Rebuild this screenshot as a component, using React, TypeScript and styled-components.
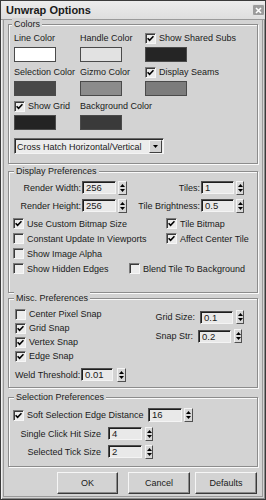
import React from "react";
import styled, { createGlobalStyle } from "styled-components";

const BG = "#d3d3d3";

const Global = createGlobalStyle`
  html, body { margin: 0; padding: 0; background: #ffffff; }
  body { font-family: "Liberation Sans", Arial, sans-serif; }
  * { box-sizing: border-box; }
`;

const Window = styled.div`
  width: 266px;
  height: 500px;
  background: ${BG};
  border: 1px solid #3a3a3a;
  box-shadow: inset 1px 1px 0 #f2f2f2, inset -1px -1px 0 #8a8a8a, inset 0 0 0 2px ${BG},
    inset 0 0 0 3px #9a9a9a;
  display: flex;
  flex-direction: column;
  font-family: "Liberation Sans", Arial, sans-serif;
  font-size: 9px;
  color: #1a1a1a;
  overflow: hidden;
`;

const TitleBar = styled.div`
  height: 19px;
  flex: none;
  display: flex;
  align-items: center;
  justify-content: space-between;
  padding: 0 0 0 5px;
  background: linear-gradient(#ececec, #dedede);
  border-bottom: 1px solid #9a9a9a;
  font-size: 11px;
  font-weight: bold;
  color: #1a1a1a;
`;

const CloseBtn = styled.div`
  width: 13px;
  height: 12px;
  border: 1px solid #e4e4e4;
  border-radius: 2px;
  background: #9c9c9c;
  display: flex;
  align-items: center;
  justify-content: center;
`;

const Content = styled.div`
  flex: 1;
  display: flex;
  flex-direction: column;
  padding: 0 7px 0 7px;
`;

const Group = styled.div<{ $h: number; $mt: number; $pt: number; $pl: number }>`
  position: relative;
  flex: none;
  height: ${(p) => p.$h}px;
  margin-top: ${(p) => p.$mt}px;
  padding: ${(p) => p.$pt}px 13px 0 ${(p) => p.$pl}px;
  border: 1px solid #8c8c8c;
  box-shadow: inset 1px 1px 0 #fafafa, 1px 1px 0 #fafafa;
`;

const Legend = styled.span<{ $x: number }>`
  position: absolute;
  top: -7px;
  left: ${(p) => p.$x}px;
  padding: 0 2px;
  line-height: 12px;
  background: ${BG};
  white-space: nowrap;
`;

const ColorGrid = styled.div`
  display: grid;
  grid-template-columns: 66px 65px 1fr;
  row-gap: 3px;
`;

const Cell = styled.div`
  display: flex;
  flex-direction: column;
  gap: 2px;
`;

const CellLabel = styled.div`
  height: 14px;
  line-height: 14px;
  white-space: nowrap;
  display: flex;
  align-items: center;
`;

const Swatch = styled.div<{ $c: string }>`
  width: 42px;
  height: 15px;
  border: 1px solid #4a4a4a;
  background: ${(p) => p.$c};
`;

const Dropdown = styled.div`
  margin-top: 8px;
  width: 150px;
  height: 16px;
  display: flex;
  align-items: center;
  border: 1px solid;
  border-color: #6a6a6a #f4f4f4 #f4f4f4 #6a6a6a;
  box-shadow: inset 1px 1px 0 #2a2a2a;
  background: #ececec;
  padding: 0 1px 0 2px;
`;

const DropText = styled.span`
  flex: 1;
  white-space: nowrap;
  overflow: hidden;
  padding-top: 1px;
`;

const DropArrow = styled.div`
  width: 13px;
  height: 13px;
  margin-top: 1px;
  border: 1px solid;
  border-color: #f4f4f4 #404040 #404040 #f4f4f4;
  background: ${BG};
  display: flex;
  align-items: center;
  justify-content: center;
`;

const Row = styled.div<{ $mt?: number; $h?: number }>`
  display: flex;
  align-items: center;
  height: ${(p) => p.$h ?? 13}px;
  margin-top: ${(p) => p.$mt ?? 0}px;
`;

const CheckRow = styled.div<{ $mt?: number }>`
  display: flex;
  align-items: center;
  height: 15px;
  margin-top: ${(p) => p.$mt ?? 0}px;
  padding-left: 4px;
`;

const FieldRow = styled.div`
  display: flex;
  align-items: center;
  flex: none;
`;

const FieldLabel = styled.span<{ $w?: number; $gap: number }>`
  width: ${(p) => (p.$w ? `${p.$w}px` : "auto")};
  text-align: right;
  padding-right: ${(p) => p.$gap}px;
  white-space: nowrap;
  flex: none;
`;

const Input = styled.div<{ $w: number; $h: number }>`
  width: ${(p) => p.$w}px;
  height: ${(p) => p.$h}px;
  border: 1px solid;
  border-color: #505050 #f4f4f4 #f4f4f4 #505050;
  box-shadow: inset 1px 1px 0 #1e1e1e;
  background: #e9e9e9;
  padding: 1px 0 0 3px;
  line-height: 10px;
  font-size: 9.5px;
  flex: none;
`;

const SpinBox = styled.div<{ $gap: number; $w: number }>`
  margin-left: ${(p) => p.$gap}px;
  width: ${(p) => p.$w}px;
  height: 14px;
  border: 1px solid;
  border-color: #f4f4f4 #505050 #505050 #f4f4f4;
  background: #d8d8d8;
  display: flex;
  align-items: center;
  justify-content: center;
  flex: none;
`;

const CheckItem = styled.div<{ $w?: number }>`
  display: flex;
  align-items: center;
  gap: 3px;
  width: ${(p) => (p.$w ? `${p.$w}px` : "auto")};
  flex: none;
  white-space: nowrap;
`;

const Box = styled.div`
  width: 11px;
  height: 11px;
  border: 1px solid;
  border-color: #7a7a7a #f6f6f6 #f6f6f6 #7a7a7a;
  box-shadow: inset 1px 1px 0 #3a3a3a;
  background: #ececec;
  display: flex;
  align-items: center;
  justify-content: center;
  flex: none;
`;

const CheckList = styled.div`
  display: flex;
  flex-direction: column;
`;

const CheckLine = styled.div`
  height: 14px;
  display: flex;
  align-items: center;
`;

const FieldColumn = styled.div`
  display: flex;
  flex-direction: column;
  gap: 5px;
  margin-top: 3px;
`;

const MiscTop = styled.div`
  display: flex;
  justify-content: space-between;
`;

const Buttons = styled.div`
  display: flex;
  justify-content: flex-end;
  margin-top: 5px;
  padding-right: 1px;
`;

const Button = styled.div<{ $w: number; $after: number }>`
  width: ${(p) => p.$w}px;
  height: 22px;
  margin-right: ${(p) => p.$after}px;
  border: 1px solid;
  border-color: #f6f6f6 #3a3a3a #3a3a3a #f6f6f6;
  box-shadow: inset -1px -1px 0 #8a8a8a;
  background: ${BG};
  display: flex;
  align-items: center;
  justify-content: center;
  font-size: 9px;
`;

const Check = ({ checked, label, w }: { checked?: boolean; label: string; w?: number }) => (
  <CheckItem $w={w}>
    <Box>
      {checked && (
        <svg width="7" height="7" viewBox="0 0 7 7">
          <path d="M0.6 3.2 L2.6 5.3 L6.5 1.2" fill="none" stroke="#000" strokeWidth="1.6" />
        </svg>
      )}
    </Box>
    <span>{label}</span>
  </CheckItem>
);

const Spinner = ({ gap = 2, w = 9 }: { gap?: number; w?: number }) => (
  <SpinBox $gap={gap} $w={w}>
    <svg width="5" height="10" viewBox="0 0 5 10">
      <path d="M2.5 1 L5 4 H0 Z" fill="#000" />
      <path d="M0 6 H5 L2.5 9 Z" fill="#000" />
    </svg>
  </SpinBox>
);

const Field = ({
  label,
  value,
  lw,
  lgap = 1,
  iw,
  ih = 13,
  sgap = 2,
  sw = 9,
}: {
  label?: string;
  value: string;
  lw?: number;
  lgap?: number;
  iw: number;
  ih?: number;
  sgap?: number;
  sw?: number;
}) => (
  <FieldRow>
    {label && (
      <FieldLabel $w={lw} $gap={lgap}>
        {label}
      </FieldLabel>
    )}
    <Input $w={iw} $h={ih}>
      {value}
    </Input>
    <Spinner gap={sgap} w={sw} />
  </FieldRow>
);

const ColorCell = ({ label, color, checked }: { label: string; color: string; checked?: boolean }) => (
  <Cell>
    <CellLabel>{checked === undefined ? label : <Check checked={checked} label={label} />}</CellLabel>
    <Swatch $c={color} />
  </Cell>
);

export default function App() {
  return (
    <>
      <Global />
      <Window>
        <TitleBar>
          <span>Unwrap Options</span>
          <CloseBtn>
            <svg width="7" height="7" viewBox="0 0 7 7">
              <path d="M1 1 L6 6 M6 1 L1 6" stroke="#fff" strokeWidth="1.6" />
            </svg>
          </CloseBtn>
        </TitleBar>
        <Content>
          <Group $h={140} $mt={4} $pt={6} $pl={5}>
            <Legend $x={3}>Colors</Legend>
            <ColorGrid>
              <ColorCell label="Line Color" color="#ffffff" />
              <ColorCell label="Handle Color" color="#e2e2e2" />
              <ColorCell label="Show Shared Subs" color="#252525" checked />
              <ColorCell label="Selection Color" color="#484848" />
              <ColorCell label="Gizmo Color" color="#8c8c8c" />
              <ColorCell label="Display Seams" color="#7c7c7c" checked />
              <ColorCell label="Show Grid" color="#232323" checked />
              <ColorCell label="Background Color" color="#3a3a3a" />
            </ColorGrid>
            <Dropdown>
              <DropText>Cross Hatch Horizontal/Vertical</DropText>
              <DropArrow>
                <svg width="5" height="3" viewBox="0 0 5 3">
                  <path d="M0 0 H5 L2.5 3 Z" fill="#000" />
                </svg>
              </DropArrow>
            </Dropdown>
          </Group>

          <Group $h={122} $mt={7} $pt={9} $pl={0}>
            <Legend $x={5}>Display Preferences</Legend>
            <Row>
              <Field label="Render Width:" value="256" lw={73} iw={34} />
              <Field label="Tiles:" value="1" lw={74} iw={33} sw={8} />
            </Row>
            <Row $mt={5}>
              <Field label="Render Height:" value="256" lw={73} iw={34} />
              <Field label="Tile Brightness:" value="0.5" lw={74} iw={33} sw={8} />
            </Row>
            <CheckRow $mt={4}>
              <Check checked label="Use Custom Bitmap Size" w={153} />
              <Check checked label="Tile Bitmap" />
            </CheckRow>
            <CheckRow>
              <Check label="Constant Update In Viewports" w={153} />
              <Check checked label="Affect Center Tile" />
            </CheckRow>
            <CheckRow>
              <Check label="Show Image Alpha" />
            </CheckRow>
            <CheckRow>
              <Check label="Show Hidden Edges" w={116} />
              <Check label="Blend Tile To Background" />
            </CheckRow>
          </Group>

          <Group $h={90} $mt={5} $pt={8} $pl={6}>
            <Legend $x={5}>Misc. Preferences</Legend>
            <MiscTop>
              <CheckList>
                <CheckLine>
                  <Check label="Center Pixel Snap" />
                </CheckLine>
                <CheckLine>
                  <Check checked label="Grid Snap" />
                </CheckLine>
                <CheckLine>
                  <Check checked label="Vertex Snap" />
                </CheckLine>
                <CheckLine>
                  <Check checked label="Edge Snap" />
                </CheckLine>
              </CheckList>
              <FieldColumn>
                <Field label="Grid Size:" value="0.1" lgap={5} iw={33} sgap={3} sw={8} />
                <Field label="Snap Str:" value="0.2" lgap={5} iw={33} sgap={3} sw={8} />
              </FieldColumn>
            </MiscTop>
            <Row $mt={5}>
              <Field label="Weld Threshold:" value="0.01" lw={66} iw={32} sgap={4} />
            </Row>
          </Group>

          <Group $h={70} $mt={9} $pt={10} $pl={4}>
            <Legend $x={5}>Selection Preferences</Legend>
            <Row $h={14}>
              <Check checked label="Soft Selection Edge Distance" w={135} />
              <Field value="16" iw={34} ih={14} />
            </Row>
            <Row $mt={5}>
              <Field label="Single Click Hit Size" value="4" lw={95} lgap={7} iw={34} sgap={3} sw={8} />
            </Row>
            <Row $mt={5}>
              <Field label="Selected Tick Size" value="2" lw={95} lgap={7} iw={34} sgap={3} sw={8} />
            </Row>
          </Group>

          <Buttons>
            <Button $w={61} $after={10}>OK</Button>
            <Button $w={62} $after={5}>Cancel</Button>
            <Button $w={62} $after={0}>Defaults</Button>
          </Buttons>
        </Content>
      </Window>
    </>
  );
}
